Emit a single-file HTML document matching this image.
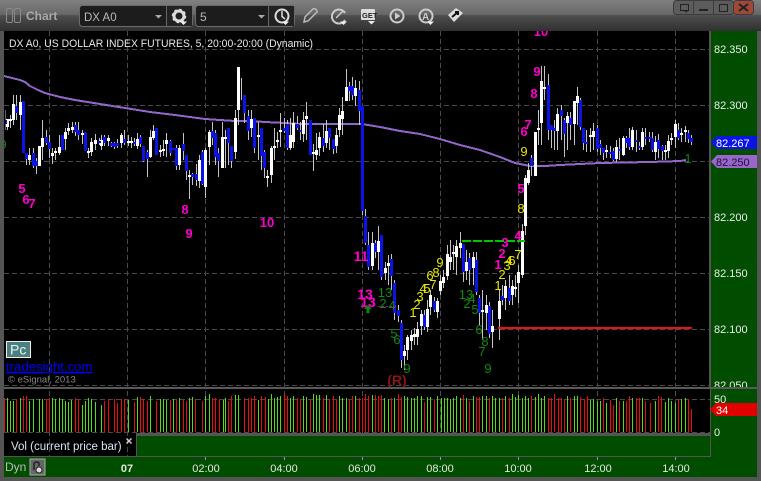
<!DOCTYPE html>
<html><head><meta charset="utf-8"><style>
html,body{margin:0;padding:0;background:#555}
#r{position:relative;width:761px;height:481px;overflow:hidden;background:#555}
svg{position:absolute;left:0;top:0}
text{font-family:"Liberation Sans",sans-serif}
.m{fill:#ff00cc;font-size:13px;font-weight:bold;text-anchor:middle}
.y{fill:#e6e600;font-size:13px;text-anchor:middle}
.g{fill:#0e8a0e;font-size:13px;text-anchor:middle}
.p{fill:#e8f0e8;font-size:11px}
.t{fill:#e4e8dc;font-size:11px;text-anchor:middle}
</style></head><body><div id="r">
<svg width="761" height="481" viewBox="0 0 761 481" shape-rendering="crispEdges">
<defs>
<linearGradient id="tb" x1="0" y1="0" x2="0" y2="1"><stop offset="0" stop-color="#808080"/><stop offset=".47" stop-color="#676767"/><stop offset=".5" stop-color="#4e4e4e"/><stop offset="1" stop-color="#303030"/></linearGradient>
<clipPath id="ch"><rect x="4" y="31" width="706" height="356"/></clipPath>
<clipPath id="pa"><rect x="711" y="370" width="46" height="17"/></clipPath>
</defs>
<rect width="761" height="481" fill="#555"/>
<rect x="0" y="0" width="761" height="31" fill="url(#tb)"/>
<rect x="4" y="31" width="706" height="356" fill="#000"/>
<rect x="710" y="31" width="47" height="446" fill="#004d00"/>
<rect x="709" y="31" width="2" height="426" fill="#555"/>
<rect x="4" y="387" width="753" height="2" fill="#5a5a5a"/>
<rect x="4" y="389" width="706" height="44" fill="#000"/>
<rect x="4" y="433" width="132" height="24" fill="#000"/>
<rect x="136" y="436" width="574" height="21" fill="#004d00"/>
<path d="M136.500 457V435.500H710M4 457H711" stroke="#555" stroke-width="1" fill="none"/>
<rect x="4" y="457" width="753" height="20" fill="#004d00"/>
<rect x="4" y="456" width="706" height="1" fill="#555"/>

<!-- grid -->
<g stroke="#4a4a4a" stroke-width="1" stroke-dasharray="5 3" fill="none">
<path d="M4 49.500H710M4 105.500H710M4 161.500H710M4 217.500H710M4 273.500H710M4 329.500H710M4 385.500H710M4 399.500H710M4 432.500H710"/>
<path d="M49.500 31V457M127.500 31V457M205.500 31V433M284.500 31V433M362.500 31V433M440.500 31V433M518.500 31V433M597.500 31V433M675.500 31V433"/>
</g>
<path d="M205.500 457V460M284.500 457V460M362.500 457V460M440.500 457V460M518.500 457V460M597.500 457V460M675.500 457V460" stroke="#999"/>

<!-- moving average -->
<g clip-path="url(#ch)">
<path d="M4 76L12 78L20 80L25 82L30 86L38 90L45 93L60 97L75 100L100 104L125 108L150 112L175 115L205 119L235 121L250 121L265 122L285 123L300 124L340 124L362 124L380 127L400 131L420 134L440 139L460 145L480 150L500 157L515 163L530 166L545 166L560 165L600 163L650 162L680 161L686 160" fill="none" stroke="#9366cc" stroke-width="2"/>
</g>

<!-- candles -->
<g transform="translate(1.5,0)" fill="none" clip-path="url(#ch)">
<path stroke="#c4c4c4" stroke-width="1" d="M4 110V130M6 119V130M9 115V128M12 95V125M15 95V120M19 95V130M25 153V165M28 148V165M32 148V168M35 158V174M41 120V160M45 130V145M48 135V158M51 148V164M54 148V160M58 135V155M64 128V150M67 123V135M71 122V133M74 122V136M77 122V140M81 130V144M87 148V158M90 138V156M94 134V150M98 138V145M100 135V150M103 135V146M107 135V146M110 142V147M113 142V149M116 139V148M120 133V148M123 130V145M127 135V146M130 137V148M133 138V146M136 133V149M139 135V147M142 146V162M146 150V177M149 130V158M152 125V140M159 145V157M162 140V156M165 133V157M169 140V156M175 145V170M178 145V170M182 133V160M185 155V180M188 170V199M191 173V185M195 164V186M198 155V188M201 150V185M204 148V198M208 130V165M211 122V145M214 130V165M217 148V177M221 122V168M224 130V168M227 128V165M230 146V168M234 110V159M237 67V125M240 78V100M243 100V123M247 110V140M250 110V137M253 118V153M257 122V160M260 128V170M263 150V178M266 170V187M270 146V183M273 128V160M276 132V148M279 113V147M283 118V133M286 120V150M289 118V150M292 112V148M296 116V130M299 122V140M302 112V142M305 102V140M312 144V171M315 133V160M318 132V156M322 124V152M325 120V148M328 128V150M332 139V154M335 128V153M338 108V137M341 97V135M345 69V101M348 82V101M351 77V100M354 80V106M358 81V125M361 106V215M364 209V245M367 232V270M371 232V270M374 240V258M377 226V270M380 235V280M384 262V280M387 255V285M390 254V290M393 280V320M397 305V322M400 320V368M403 345V370M406 335V360M410 330V350M413 328V345M416 322V345M420 310V335M423 310V330M426 300V332M429 290V315M433 297V312M436 298V318M439 275V295M442 270V288M446 245V280M449 240V270M452 245V270M455 240V275M459 232V258M462 244V282M465 250V280M468 253V285M472 252V285M475 252V295M478 295V325M481 290V340M485 295V330M488 302V338M491 310V348M498 290V340M501 285V305M504 280V310M508 275V305M511 280V305M514 275V297M517 265V303M521 224V278M524 175V235M527 163V185M530 155V176M537 110V145M540 66V145M543 66V100M547 74V140M550 125V148M553 120V150M556 108V150M560 105V140M563 118V157M566 112V150M569 112V140M573 101V145M576 87V125M579 98V130M582 128V150M585 130V152M589 128V152M592 123V150M596 125V152M599 140V155M602 148V160M605 145V158M609 146V158M612 148V161M615 140V162M618 138V160M622 136V156M625 136V148M628 128V150M631 127V150M635 130V152M638 142V150M641 128V150M644 128V145M648 132V142M651 132V152M654 136V160M657 134V158M661 145V160M664 145V160M667 135V158M670 133V145M674 120V148M677 123V140M680 128V142M684 126V142M687 130V143M690 135V145"/>
<path stroke="#ffffff" stroke-width="3" d="M6 119V127M9 119V121M12 104V120M19 102V115M28 155V160M38 146V166M41 138V147M51 153V156M54 151V153M58 147V153M64 132V139M67 128V131M71 127V130M81 133V135M87 151V153M90 142V152M94 140V144M100 140V146M107 138V141M120 135V143M127 141V143M130 141V143M136 139V146M149 137V157M152 131V138M159 150V152M162 149V151M165 140V144M178 148V165M188 175V177M198 160V181M204 150V187M208 132V147M221 137V168M224 137V139M234 118V152M237 67V110M250 119V128M257 135V137M266 176V178M270 148V175M273 146V148M276 140V142M279 130V132M289 135V148M292 123V142M302 120V134M305 116V119M312 152V154M315 150V155M318 137V148M325 131V143M335 135V146M338 115V130M341 111V119M345 87V101M354 88V96M371 243V266M377 241V252M384 268V273M387 263V266M403 351V356M406 337V350M410 335V341M413 334V337M416 329V337M420 314V326M426 309V327M429 295V307M436 301V312M439 281V291M442 277V283M446 254V276M449 257V262M452 252V254M455 246V257M459 243V248M465 262V271M472 257V268M481 310V312M485 305V313M491 326V332M498 301V319M504 286V298M511 286V295M514 287V289M517 272V283M521 231V275M524 178V226M527 170V183M534 132V176M537 128V130M540 81V123M543 87V89M556 114V131M566 116V123M573 101V124M576 96V103M589 135V137M592 131V137M605 150V152M615 147V159M622 138V155M631 130V147M641 132V147M654 142V152M664 150V152M667 141V151M670 138V140M674 124V137M680 133V135M684 130V132"/>
<path stroke="#0a14e6" stroke-width="3" d="M4 120V124M15 106V113M22 101V153M25 153V159M32 153V166M35 161V166M45 137V143M48 142V149M61 135V150M74 125V132M77 130V135M84 132V151M98 141V143M103 137V143M110 143V146M113 143V147M116 143V146M123 139V143M133 142V144M139 137V144M142 146V161M146 152V159M155 128V155M169 141V153M172 148V150M175 148V166M182 144V151M185 155V171M191 174V177M195 174V180M201 152V184M211 131V138M214 133V157M217 153V161M227 128V143M230 146V161M243 95V113M247 116V131M253 118V148M260 128V156M263 152V168M283 128V131M286 124V148M296 124V128M299 130V132M309 120V155M322 138V146M328 128V138M332 139V149M348 86V91M351 86V95M358 90V111M361 106V211M364 216V243M367 245V267M374 243V252M380 235V277M390 259V276M393 283V313M397 310V316M400 323V360M423 315V327M433 301V310M462 244V272M468 258V270M475 260V292M478 298V313M488 306V334M501 296V300M508 288V301M530 158V166M547 85V130M550 125V130M553 128V131M560 110V116M563 120V134M569 118V125M579 100V127M582 128V143M585 142V144M596 128V149M599 144V148M602 148V153M609 152V154M612 151V160M618 149V151M625 138V143M628 138V147M635 140V142M638 146V148M644 137V139M648 137V139M651 138V150M657 140V149M661 146V151M677 130V138M687 133V139M690 138V142"/>
</g>

<!-- lines -->
<rect x="498" y="327" width="194" height="2" fill="#f01010"/>
<path d="M462 241H525" stroke="#00c800" stroke-width="2" stroke-dasharray="9 2"/>
<path d="M378 306.500H398" stroke="#cc00aa" stroke-width="1" stroke-dasharray="2 2"/>

<!-- volume -->
<g fill="none" stroke-width="1" transform="translate(0.5,0)">
<path stroke="#f00a0a" d="M4 398V432M16 399V432M23 396V432M26 396V432M46 399V432M49 398V432M75 398V432M78 400V432M104 401V432M108 399V432M114 399V432M117 403V432M121 399V432M124 399V432M134 402V432M140 397V432M143 399V432M147 401V432M156 401V432M170 400V432M176 400V432M183 400V432M186 401V432M195 399V432M202 401V432M212 398V432M215 398V432M219 399V432M228 401V432M231 396V432M244 398V432M248 398V432M251 398V432M254 396V432M261 396V432M265 397V432M284 394V432M287 396V432M297 398V432M300 399V432M310 399V432M323 398V432M329 399V432M333 396V432M336 399V432M349 399V432M352 396V432M359 398V432M362 398V432M365 394V432M368 396V432M375 395V432M378 396V432M381 395V432M391 398V432M398 394V432M401 397V432M424 402V432M434 399V432M463 395V432M469 401V432M476 397V432M479 397V432M489 398V432M502 398V432M509 398V432M531 396V432M548 398V432M551 398V432M554 394V432M558 398V432M561 398V432M564 399V432M570 398V432M580 397V432M584 399V432M587 396V432M603 398V432M610 400V432M613 405V432M619 401V432M626 401V432M629 396V432M636 398V432M639 398V432M645 401V432M650 403V432M658 396V432M661 397V432M678 399V432M688 399V432M691 409V432"/>
<path stroke="#50e010" d="M7 398V432M10 401V432M13 401V432M20 398V432M29 401V432M33 399V432M39 399V432M42 399V432M52 398V432M55 399V432M59 398V432M62 399V432M65 401V432M68 402V432M71 400V432M82 405V432M85 401V432M88 398V432M91 399V432M95 402V432M101 405V432M128 400V432M137 397V432M150 396V432M160 399V432M163 399V432M166 400V432M173 399V432M179 398V432M189 398V432M192 397V432M205 396V432M209 394V432M223 400V432M225 398V432M235 395V432M238 395V432M258 400V432M268 399V432M271 394V432M274 398V432M277 397V432M280 396V432M290 398V432M293 396V432M303 396V432M306 397V432M313 394V432M316 395V432M319 395V432M326 395V432M339 396V432M342 398V432M346 398V432M355 396V432M372 395V432M384 398V432M388 399V432M394 398V432M404 396V432M407 397V432M411 398V432M414 398V432M417 396V432M421 396V432M427 397V432M430 397V432M437 396V432M441 398V432M444 398V432M447 398V432M450 399V432M453 398V432M456 396V432M460 398V432M466 398V432M473 396V432M482 396V432M486 396V432M492 396V432M495 398V432M499 398V432M505 396V432M512 394V432M515 397V432M518 395V432M522 398V432M525 396V432M528 398V432M535 397V432M538 394V432M541 398V432M544 396V432M567 396V432M574 396V432M577 396V432M590 400V432M593 399V432M597 401V432M600 401V432M606 403V432M616 398V432M623 401V432M632 398V432M642 398V432M655 401V432M665 402V432M668 398V432M671 401V432M675 403V432M681 399V432M685 398V432"/>
</g>

<!-- indicator numbers -->
<g clip-path="url(#ch)" shape-rendering="auto">
<text class="m" x="22" y="193">5</text><text class="m" x="26" y="204">6</text><text class="m" x="32" y="208">7</text>
<text class="m" x="185" y="214">8</text><text class="m" x="189" y="238">9</text><text class="m" x="267" y="227">10</text>
<text class="m" x="541" y="36">10</text><text class="m" x="537" y="76">9</text><text class="m" x="534" y="98">8</text><text class="m" x="528" y="129">7</text><text class="m" x="524" y="136">6</text><text class="m" x="521" y="193">5</text><text class="m" x="518" y="240">4</text><text class="m" x="505" y="247">3</text><text class="m" x="502" y="258">2</text><text class="m" x="498" y="269">1</text>
<text class="m" x="361" y="261" style="font-size:14px">11</text><text class="m" x="365" y="299" style="font-size:14px">13</text><text class="m" x="368" y="307" style="font-size:14px">13</text>
<text class="y" x="524" y="156">9</text><text class="y" x="521" y="213">8</text><text class="y" x="518" y="259">7</text>
<text class="y" x="413" y="317">1</text><text class="y" x="417" y="309">2</text><text class="y" x="420" y="301">3</text><text class="y" x="423" y="293">4</text><text class="y" x="427" y="293">5</text><text class="y" x="430" y="280">6</text><text class="y" x="433" y="289">7</text><text class="y" x="436" y="277">8</text><text class="y" x="440" y="267">9</text>
<text class="y" x="498" y="290">1</text><text class="y" x="502" y="279">2</text><text class="y" x="507" y="270">3</text><text class="y" x="509" y="265">4</text><text class="y" x="512" y="265">6</text>
<text class="g" x="385" y="297">13</text><text class="g" x="383" y="308">2</text><text class="g" x="392" y="310">4</text><text class="g" x="394" y="338">5</text><text class="g" x="397" y="344">6</text><text class="g" x="407" y="373">9</text>
<text class="g" x="466" y="299">13</text><text class="g" x="467" y="308">2</text><text class="g" x="472" y="303">4</text><text class="g" x="475" y="314">5</text><text class="g" x="479" y="334">6</text><text class="g" x="485" y="346">8</text><text class="g" x="482" y="356">7</text><text class="g" x="488" y="373">9</text><text class="g" x="688" y="163">1</text><text class="g" x="3" y="149">9</text>
<text x="397" y="385" fill="#8b1414" font-size="14" font-weight="bold" text-anchor="middle">(R)</text>
<path d="M368 305L372 309H369.500V313H366.500V309H364Z" fill="#0a8a0a"/>

<text x="9" y="47" fill="#e8e8e8" font-size="11" textLength="304" lengthAdjust="spacingAndGlyphs">DX A0, US DOLLAR INDEX FUTURES, 5, 20:00-20:00 (Dynamic)</text>
</g>

<!-- logo -->
<rect x="6.500" y="341.500" width="24" height="16" fill="#4a8080" stroke="#eee"/>
<text x="10" y="354.500" fill="#e8f4f4" font-size="14" shape-rendering="auto">Pc</text>
<text x="6" y="371" fill="#0000ff" font-size="13.200" text-decoration="underline">tradesight.com</text>
<text x="8" y="382.500" fill="#888" font-size="9.500">© eSignal, 2013</text>

<!-- price axis -->
<g shape-rendering="auto">
<text class="p" x="714" y="53">82.350</text><text class="p" x="714" y="109">82.300</text><text class="p" x="714" y="221">82.200</text><text class="p" x="714" y="277">82.150</text><text class="p" x="714" y="333">82.100</text>
<g clip-path="url(#pa)"><text class="p" x="714" y="389">82.050</text></g>
<path d="M711 142.500L717 136H757V149H717Z" fill="#0a14e6"/><text x="716" y="147" fill="#fff" font-size="11">82.267</text>
<path d="M711 161.500L717 155H757V168H717Z" fill="#9966cc"/><text x="716" y="166" fill="#1c1030" font-size="11">82.250</text>
<text class="p" x="714" y="403">50</text><text class="p" x="714" y="436">0</text>
<path d="M710 409.500L716 403H757V416H716Z" fill="#e00000"/><text x="716" y="414" fill="#fff" font-size="11">34</text>

<!-- bottom strip -->
<text x="11" y="450" fill="#d8e4f8" font-size="11.500">Vol (current price bar)</text>
<path d="M126.500 438.500L131.500 443.500M131.500 438.500L126.500 443.500" stroke="#ccc" stroke-width="1.500"/>
<text x="5" y="471" fill="#bbb" font-size="12">Dyn</text>
<rect x="30" y="459" width="15" height="16" fill="#666" stroke="#aaa"/>
<path d="M34 470V464Q34 462 37 462Q39 462 39 464V466" fill="none" stroke="#222" stroke-width="1.500"/><circle cx="39" cy="470" r="3" fill="#ddd" stroke="#222"/>
<text class="t" x="127" y="472" font-weight="bold">07</text><text class="t" x="206" y="472">02:00</text><text class="t" x="284" y="472">04:00</text><text class="t" x="362" y="472">06:00</text><text class="t" x="440" y="472">08:00</text><text class="t" x="518" y="472">10:00</text><text class="t" x="598" y="472">12:00</text><text class="t" x="676" y="472">14:00</text>

<!-- toolbar -->
<rect x="6.500" y="8.500" width="6" height="14" rx="1.500" fill="none" stroke="#8a8a8a"/>
<rect x="14.500" y="8.500" width="6" height="14" rx="1.500" fill="none" stroke="#8a8a8a"/>
<text x="26" y="20" fill="#aaa" font-size="12" font-weight="bold">Chart</text>
<rect x="79.500" y="5.500" width="113" height="21" rx="3" fill="#1c1c1c" stroke="#6a6a6a"/>
<rect x="167" y="6" width="25" height="20" fill="#222"/><path d="M166.500 6V26" stroke="#666"/>
<text x="84" y="21" fill="#b8b8b8" font-size="11.500">DX A0</text>
<path d="M155 15H162L158.500 18.500Z" fill="#aaa"/>
<circle cx="179" cy="16" r="5" fill="none" stroke="#ddd" stroke-width="3"/><circle cx="179" cy="16" r="6.500" fill="none" stroke="#ddd" stroke-width="1.500" stroke-dasharray="2.500 2.600"/>
<path d="M180 21.500H187L183.500 25Z" fill="#eee"/>
<rect x="195.500" y="5.500" width="99" height="21" rx="3" fill="#1c1c1c" stroke="#6a6a6a"/>
<rect x="269" y="6" width="25" height="20" fill="#222"/><path d="M268.500 6V26" stroke="#666"/>
<text x="200" y="21" fill="#b8b8b8" font-size="12">5</text>
<path d="M258 15H265L261.500 18.500Z" fill="#aaa"/>
<circle cx="282" cy="16" r="6.500" fill="none" stroke="#ddd" stroke-width="2"/><path d="M282 11V16.500L285 19" fill="none" stroke="#ddd" stroke-width="1.500"/>
<path d="M282 21.500H289L285.500 25Z" fill="#eee"/>
<path d="M304 22L305 17L313 9Q315 8 316.500 10Q318 12 316 13L308 21Z" fill="none" stroke="#bbb" stroke-width="1.500"/>
<path d="M345 13A7 7 0 1 0 345 20" fill="none" stroke="#ccc" stroke-width="2"/><path d="M336 18L343 11" stroke="#ccc" stroke-width="1.500"/><path d="M340 21.500H347L343.500 25Z" fill="#eee"/>
<rect x="361" y="9" width="14" height="11" rx="1" fill="#ddd"/><text x="362" y="18" fill="#222" font-size="7.500" font-weight="bold">GET</text><path d="M368 21H375L371.500 24.500Z" fill="#eee"/>
<circle cx="397" cy="16" r="6.500" fill="none" stroke="#ccc" stroke-width="2"/><path d="M395 12.500L400.500 16L395 19.500Z" fill="#ccc"/>
<circle cx="426" cy="16" r="6.500" fill="none" stroke="#ccc" stroke-width="2"/><text x="422" y="20" fill="#ccc" font-size="10" font-weight="bold">A</text><path d="M427 21.500H434L430.500 25Z" fill="#eee"/>
<path d="M448 15L456 8L463 13L454 22Z" fill="#ddd"/><path d="M452 17L458 12M455 12L458 12L458 15" fill="none" stroke="#111" stroke-width="2"/>

<!-- window buttons -->
<rect x="673.500" y="0.500" width="60" height="14" rx="3" fill="#5c5c5c" stroke="#3c3c3c"/>
<rect x="733.500" y="0.500" width="20" height="14" rx="3" fill="#a04838" stroke="#3c3c3c"/>
<path d="M693.500 1V14M713.500 1V14" stroke="#3c3c3c"/>
<rect x="680.500" y="4.500" width="8" height="6" fill="none" stroke="#222" stroke-width="1"/><path d="M683 10H689L686 12.500Z" fill="#222"/>
<rect x="699" y="9" width="9" height="2" fill="#222"/>
<rect x="719.500" y="4.500" width="8" height="7" fill="none" stroke="#222"/>
<path d="M739 4L748 11M748 4L739 11" stroke="#222" stroke-width="2"/>
</g>
</svg>
</div></body></html>
